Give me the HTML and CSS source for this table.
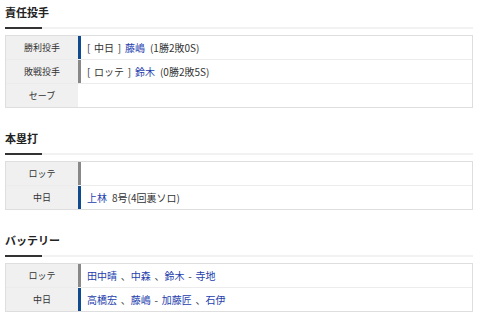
FILE: index.html
```html
<!DOCTYPE html>
<html lang="ja">
<head>
<meta charset="utf-8">
<link rel="stylesheet" href="styles.css">
</head>
<body>
<section class="sec">
  <h2 class="ttl">責任投手</h2>
  <div class="tbl">
    <div class="row">
      <div class="lbl">勝利投手</div>
      <div class="val bar-d">[ 中日 ] <a class="lk">藤嶋</a><span class="rec">(1勝2敗0S)</span></div>
    </div>
    <div class="row">
      <div class="lbl">敗戦投手</div>
      <div class="val bar-m">[ ロッテ ] <a class="lk">鈴木</a><span class="rec">(0勝2敗5S)</span></div>
    </div>
    <div class="row">
      <div class="lbl">セーブ</div>
      <div class="val"></div>
    </div>
  </div>
</section>
<section class="sec">
  <h2 class="ttl">本塁打</h2>
  <div class="tbl">
    <div class="row">
      <div class="lbl">ロッテ</div>
      <div class="val bar-m"></div>
    </div>
    <div class="row">
      <div class="lbl">中日</div>
      <div class="val bar-d"><a class="lk">上林</a><span class="rec">8号(4回裏ソロ)</span></div>
    </div>
  </div>
</section>
<section class="sec">
  <h2 class="ttl">バッテリー</h2>
  <div class="tbl">
    <div class="row">
      <div class="lbl">ロッテ</div>
      <div class="val bar-m"><a class="lk">田中晴</a> 、<a class="lk">中森</a> 、<a class="lk">鈴木</a> - <a class="lk">寺地</a></div>
    </div>
    <div class="row">
      <div class="lbl">中日</div>
      <div class="val bar-d"><a class="lk">高橋宏</a> 、<a class="lk">藤嶋</a> - <a class="lk">加藤匠</a> 、<a class="lk">石伊</a></div>
    </div>
  </div>
</section>
</body>
</html>
```
FILE: styles.css
```css
html, body {
  margin: 0;
  padding: 0;
  background: #fff;
}
body {
  font-family: "Noto Sans CJK JP", "Noto Sans", sans-serif;
  color: #333;
  padding: 4px 7px 0 5px;
}
.sec {
  margin-bottom: 22px;
}
.sec:last-child {
  margin-bottom: 0;
}
.ttl {
  position: relative;
  margin: 0 0 6px;
  font-size: 11px;
  font-weight: bold;
  line-height: 16px;
  color: #222;
  padding-bottom: 7px;
  border-bottom: 2px solid #f2f2f2;
}
.ttl::after {
  content: "";
  position: absolute;
  left: 0;
  bottom: -2px;
  width: 37px;
  height: 2px;
  background: #333;
}
.tbl {
  border: 1px solid #dedede;
  border-bottom: none;
}
.row {
  display: grid;
  grid-template-columns: 72px 1fr;
  height: 23px;
  border-bottom: 1px solid #ececec;
}
.row:last-child {
  border-bottom: 1px solid #dedede;
}
.lbl {
  background: #f0f0f0;
  font-size: 9px;
  display: flex;
  align-items: center;
  justify-content: center;
  color: #333;
}
.val {
  display: flex;
  align-items: center;
  font-size: 10px;
  padding-left: 6px;
  border-left: 3px solid transparent;
  white-space: pre;
  word-spacing: 1.5px;
  color: #333;
}
.bar-d {
  border-left-color: #0f4a8e;
}
.bar-m {
  border-left-color: #888;
}
.lk {
  color: #2540ad;
  text-decoration: none;
}
.rec {
  margin-left: 5px;
}
```
